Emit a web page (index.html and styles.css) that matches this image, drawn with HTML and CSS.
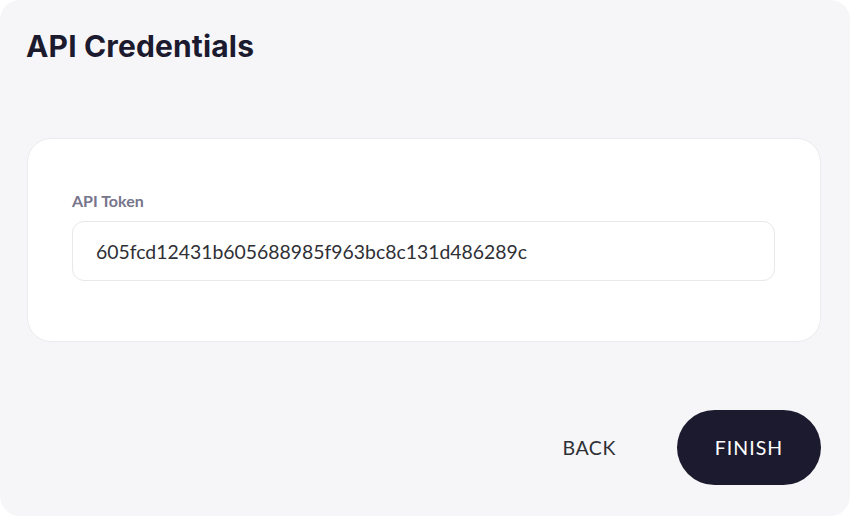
FILE: index.html
```html
<!DOCTYPE html>
<html lang="en">
<head>
<meta charset="utf-8">
<title>API Credentials</title>
<link rel="stylesheet" href="styles.css">
</head>
<body>
<div class="panel">
  <h1 class="title">API Credentials</h1>
  <div class="card">
    <label class="label" for="token">API Token</label>
    <div class="input" id="token">605fcd12431b605688985f963bc8c131d486289c</div>
  </div>
  <div class="actions">
    <button class="btn btn-text">BACK</button>
    <button class="btn btn-primary">FINISH</button>
  </div>
</div>
</body>
</html>
```
FILE: styles.css
```css
* { box-sizing: border-box; }
html, body { margin: 0; padding: 0; background: #ffffff; }
.panel {
  width: 850px;
  height: 516px;
  background: #f6f6f9;
  border-radius: 20px;
  padding: 28px 29px 0 27px;
  display: flex;
  flex-direction: column;
}
.title {
  margin: 0 0 0 -1px;
  font-family: Inter, "Noto Sans", sans-serif;
  font-weight: 700;
  font-size: 30px;
  line-height: 36px;
  letter-spacing: 0.15px;
  color: #1c1a2e;
}
.card {
  margin-top: 74px;
  height: 204px;
  background: #ffffff;
  border: 1px solid #ebebef;
  border-radius: 24px;
  padding: 52px 45px 0 44px;
  display: flex;
  flex-direction: column;
}
.label {
  font-family: Lato, sans-serif;
  font-weight: 700;
  font-size: 16px;
  line-height: 20px;
  color: #77758a;
  margin-bottom: 10px;
}
.input {
  height: 60px;
  border: 1px solid #e8e8ec;
  border-radius: 12px;
  padding: 0 23px;
  display: flex;
  align-items: center;
  font-family: Lato, sans-serif;
  font-size: 19.4px;
  color: #2f2f36;
}
.actions {
  margin-top: 68px;
  display: flex;
  justify-content: flex-end;
  gap: 22px;
}
.btn {
  height: 75px;
  border: none;
  border-radius: 38px;
  padding: 0 39px;
  font-family: Lato, sans-serif;
  font-size: 19.5px;
  font-weight: 400;
  letter-spacing: 0.6px;
  cursor: pointer;
}
.btn-text { background: transparent; color: #2f2f36; }
.btn-primary { background: #1c1a2e; color: #ffffff; width: 144px; padding: 0; letter-spacing: 1px; }
```
